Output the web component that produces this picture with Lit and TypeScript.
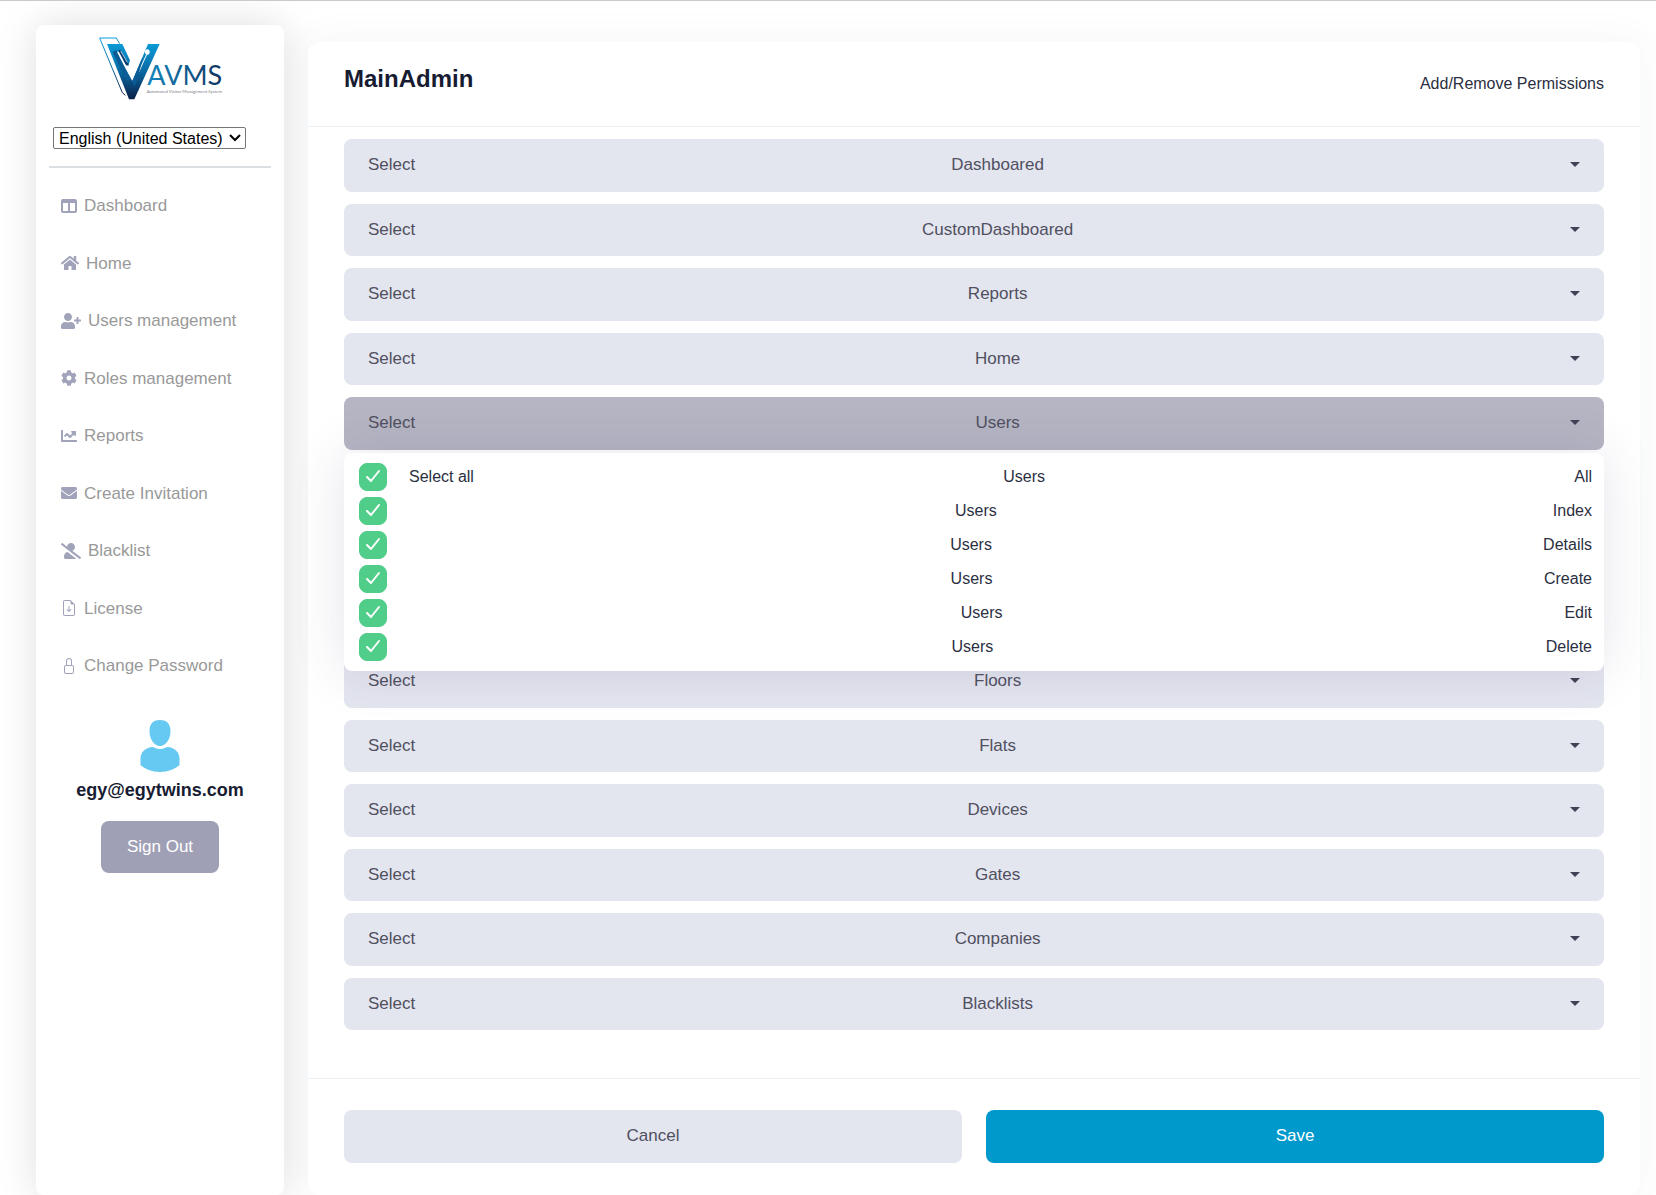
import { LitElement, html, css, svg, nothing } from "lit";
import { customElement, state } from "lit/decorators.js";
import { classMap } from "lit/directives/class-map.js";

interface NavEntry {
  label: string;
  icon: string;
  width: number;
  box: string;
}

const NAV: NavEntry[] = [
  {
    label: "Dashboard",
    width: 16,
    box: "0 0 512 512",
    icon: "M0 96C0 60.7 28.7 32 64 32H448c35.3 0 64 28.7 64 64V416c0 35.3-28.7 64-64 64H64c-35.3 0-64-28.7-64-64V96zm64 64V416H224V160H64zm384 0H288V416H448V160z",
  },
  {
    label: "Home",
    width: 18,
    box: "0 0 576 512",
    icon: "M280.37 148.26L96 300.11V464a16 16 0 0 0 16 16l112.06-.29a16 16 0 0 0 15.92-16V368a16 16 0 0 1 16-16h64a16 16 0 0 1 16 16v95.64a16 16 0 0 0 16 16.05L464 480a16 16 0 0 0 16-16V300L295.67 148.26a12.19 12.19 0 0 0-15.3 0zM571.6 251.47L488 182.56V44.05a12 12 0 0 0-12-12h-56a12 12 0 0 0-12 12v72.61L318.47 43a48 48 0 0 0-61 0L4.34 251.47a12 12 0 0 0-1.6 16.9l25.5 31A12 12 0 0 0 45.15 301l235.22-193.74a12.19 12.19 0 0 1 15.3 0L530.9 301a12 12 0 0 0 16.9-1.6l25.5-31a12 12 0 0 0-1.7-16.93z",
  },
  {
    label: "Users management",
    width: 20,
    box: "0 0 640 512",
    icon: "M624 208h-64v-64c0-8.8-7.2-16-16-16h-32c-8.8 0-16 7.2-16 16v64h-64c-8.8 0-16 7.2-16 16v32c0 8.8 7.2 16 16 16h64v64c0 8.8 7.2 16 16 16h32c8.8 0 16-7.2 16-16v-64h64c8.8 0 16-7.2 16-16v-32c0-8.8-7.2-16-16-16zm-400 48c70.7 0 128-57.3 128-128S294.7 0 224 0 96 57.3 96 128s57.3 128 128 128zm89.6 32h-16.7c-22.2 10.2-46.9 16-72.9 16s-50.6-5.8-72.9-16h-16.7C60.2 288 0 348.2 0 422.4V464c0 26.5 21.5 48 48 48h352c26.5 0 48-21.5 48-48v-41.6c0-74.2-60.2-134.4-134.4-134.4z",
  },
  {
    label: "Roles management",
    width: 16,
    box: "0 0 512 512",
    icon: "M487.4 315.7l-42.6-24.6c4.3-23.2 4.3-47 0-70.2l42.6-24.6c4.9-2.8 7.1-8.6 5.5-14-11.1-35.6-30-67.8-54.7-94.6-3.8-4.1-10-5.1-14.8-2.3L380.8 110c-17.9-15.4-38.5-27.3-60.8-35.1V25.8c0-5.6-3.9-10.5-9.4-11.7-36.7-8.2-74.3-7.8-109.2 0-5.5 1.2-9.4 6.1-9.4 11.7V75c-22.2 7.9-42.8 19.8-60.8 35.1L88.7 85.5c-4.9-2.8-11-1.9-14.8 2.3-24.7 26.7-43.6 58.9-54.7 94.6-1.7 5.4.6 11.2 5.5 14L67.3 221c-4.3 23.2-4.3 47 0 70.2l-42.6 24.6c-4.9 2.8-7.1 8.6-5.5 14 11.1 35.6 30 67.8 54.7 94.6 3.8 4.1 10 5.1 14.8 2.3l42.6-24.6c17.9 15.4 38.5 27.3 60.8 35.1v49.2c0 5.6 3.9 10.5 9.4 11.7 36.7 8.2 74.3 7.8 109.2 0 5.5-1.2 9.4-6.1 9.4-11.7v-49.2c22.2-7.9 42.8-19.8 60.8-35.1l42.6 24.6c4.9 2.8 11 1.9 14.8-2.3 24.7-26.7 43.6-58.9 54.7-94.6 1.5-5.5-.7-11.3-5.6-14.1zM256 336c-44.1 0-80-35.9-80-80s35.9-80 80-80 80 35.9 80 80-35.9 80-80 80z",
  },
  {
    label: "Reports",
    width: 16,
    box: "0 0 512 512",
    icon: "M496 384H64V80c0-8.84-7.16-16-16-16H16C7.16 64 0 71.16 0 80v336c0 17.67 14.33 32 32 32h464c8.84 0 16-7.16 16-16v-32c0-8.84-7.16-16-16-16zM464 96H345.94c-21.38 0-32.09 25.85-16.97 40.97l32.4 32.4L288 242.75l-73.37-73.37c-12.5-12.5-32.76-12.5-45.25 0l-68.69 68.69c-6.25 6.25-6.25 16.38 0 22.63l22.62 22.62c6.25 6.25 16.38 6.25 22.63 0L192 237.25l73.37 73.37c12.5 12.5 32.76 12.5 45.25 0l96-96 32.4 32.4c15.12 15.12 40.97 4.41 40.97-16.97V112c.01-8.84-7.15-16-15.99-16z",
  },
  {
    label: "Create Invitation",
    width: 16,
    box: "0 0 512 512",
    icon: "M502.3 190.8c3.9-3.1 9.7-.2 9.7 4.7V400c0 26.5-21.5 48-48 48H48c-26.5 0-48-21.5-48-48V195.6c0-5 5.7-7.8 9.7-4.7 22.4 17.4 52.1 39.5 154.1 113.6 21.1 15.4 56.7 47.8 92.2 47.6 35.7.3 72-32.8 92.3-47.6 102-74.1 131.6-96.3 154-113.7zM256 320c23.2.4 56.6-29.2 73.4-41.4 132.7-96.3 142.8-104.7 173.4-128.7 5.8-4.5 9.2-11.5 9.2-18.9v-19c0-26.5-21.5-48-48-48H48c-26.5 0-48 21.5-48 48v19c0 7.4 3.4 14.3 9.2 18.9 30.6 23.9 40.7 32.4 173.4 128.7 16.8 12.2 50.2 41.8 73.4 41.4z",
  },
  {
    label: "Blacklist",
    width: 20,
    box: "0 0 640 512",
    icon: "M633.8 458.1L362.3 248.3C412.1 230.7 448 183.8 448 128 448 57.3 390.7 0 320 0c-67.1 0-121.5 51.8-126.9 117.4L45.5 3.4C38.5-2 28.5-.8 23 6.2L3.4 31.4c-5.4 7-4.2 17 2.8 22.4l588.4 454.7c7 5.4 17 4.2 22.5-2.8l19.6-25.3c5.4-6.8 4.1-16.9-2.9-22.3zM96 422.4V464c0 26.5 21.5 48 48 48h350.2L207.4 290.3C144.2 301.3 96 356 96 422.4z",
  },
  {
    label: "License",
    width: 16,
    box: "0 0 16 16",
    icon: "M8.500 6.500a.5.5 0 0 0-1 0v3.793L6.354 9.146a.5.5 0 1 0-.708.708l2 2a.5.5 0 0 0 .708 0l2-2a.5.5 0 0 0-.708-.708L8.500 10.293V6.500zM14 14V4.500L9.500 0H4a2 2 0 0 0-2 2v12a2 2 0 0 0 2 2h8a2 2 0 0 0 2-2zM9.500 3A1.500 1.500 0 0 0 11 4.500h2V14a1 1 0 0 1-1 1H4a1 1 0 0 1-1-1V2a1 1 0 0 1 1-1h5.500v2z",
  },
  {
    label: "Change Password",
    width: 16,
    box: "0 0 16 16",
    icon: "M8 1a2 2 0 0 1 2 2v4H6V3a2 2 0 0 1 2-2zm3 6V3a3 3 0 0 0-6 0v4a2 2 0 0 0-2 2v5a2 2 0 0 0 2 2h6a2 2 0 0 0 2-2V9a2 2 0 0 0-2-2zM5 8h6a1 1 0 0 1 1 1v5a1 1 0 0 1-1 1H5a1 1 0 0 1-1-1V9a1 1 0 0 1 1-1z",
  },
];

const GROUPS: (string | null)[] = [
  "Dashboared",
  "CustomDashboared",
  "Reports",
  "Home",
  "Users",
  null,
  null,
  null,
  "Floors",
  "Flats",
  "Devices",
  "Gates",
  "Companies",
  "Blacklists",
];

const ACTIONS = ["All", "Index", "Details", "Create", "Edit", "Delete"];

const shared = css`
  * {
    box-sizing: border-box;
  }
  button,
  select,
  input {
    font-family: inherit;
  }
`;

@customElement("brand-logo")
export class BrandLogo extends LitElement {
  static styles = css`
    :host {
      display: block;
    }
    .mark {
      display: block;
    }
    .name {
      font-family: Lato, "Liberation Sans", sans-serif;
      font-size: 81px;
    }
    .tagline {
      font-family: Lato, "Liberation Sans", sans-serif;
      font-size: 13px;
    }
  `;

  render() {
    return html`<svg class="mark" width="124" height="64" viewBox="55 47 372 192" role="img" aria-label="AVMS">
      <defs>
        <linearGradient id="arm" x1="0" y1="0" x2="0" y2="1">
          <stop offset="0" stop-color="#0a9bd6" />
          <stop offset="0.5" stop-color="#0a68a2" />
          <stop offset="1" stop-color="#0a2048" />
        </linearGradient>
        <linearGradient id="word" x1="0" y1="0" x2="1" y2="0">
          <stop offset="0" stop-color="#1488bf" />
          <stop offset="1" stop-color="#10325f" />
        </linearGradient>
      </defs>
      <path d="M137 225 L128 217 L60 53 H110 L120 70" fill="none" stroke="url(#arm)" stroke-width="3" />
      <path d="M82 71 H128 L151 120 L146 137 L137 131 L120 94 H110 L158 182 L205 71 H240 L164 237 H148 Z" fill="url(#arm)" />
      <path d="M104 92 L146 178" stroke="#0b5c96" stroke-width="12" />
      <path d="M120 92 L142 132" stroke="#0b3f73" stroke-width="7" stroke-linecap="round" />
      <path d="M123 92 L143 126" stroke="#fff" stroke-width="2" />
      <path d="M202 100 L164 184" stroke="#fff" stroke-width="3" />
      <path d="M189 110 L158 182 L164 200 L176 168 Z" fill="#0b5c96" />
      <ellipse cx="203" cy="95" rx="7" ry="8" fill="#fff" />
      <text class="name" x="203" y="193" fill="url(#word)">AVMS</text>
      <text class="tagline" x="201" y="217" fill="#85808a">Automated Visitor Management System</text>
    </svg>`;
  }
}

@customElement("side-bar")
export class SideBar extends LitElement {
  static styles = [
    shared,
    css`
      :host {
        display: flex;
        flex-direction: column;
        flex: none;
        width: 248px;
        padding: 11px 13px 24px;
        box-sizing: border-box;
        border-radius: 8px;
        background: #fff;
        box-shadow: 0 0 40px rgba(0, 0, 0, 0.13);
      }
      .logo {
        align-self: center;
      }
      .picker {
        display: grid;
        align-self: flex-start;
        align-items: center;
        margin: 27px 0 17px 4px;
      }
      .language,
      .arrow {
        grid-area: 1 / 1;
      }
      .language {
        height: 22px;
        padding: 0 22px 0 5px;
        appearance: none;
        border: 1px solid #767676;
        border-radius: 2px;
        background: #fff;
        color: #000;
        font-size: 16px;
      }
      .arrow {
        justify-self: end;
        margin-right: 5px;
        pointer-events: none;
        fill: none;
        stroke: #000;
        stroke-width: 2;
      }
      .rule {
        width: 100%;
        height: 2px;
        margin: 0 0 9px;
        border: 0;
        background: #dcdfe1;
      }
      .entry {
        display: flex;
        align-items: center;
        gap: 7px;
        padding: 16px 12px;
        color: #999;
        font-size: 17px;
        line-height: 1.5;
        text-decoration: none;
      }
      .glyph {
        flex: none;
        fill: #a1a3ba;
      }
      .account {
        display: flex;
        flex-direction: column;
        align-items: center;
        margin-top: 25px;
      }
      .email {
        margin: 5px 0 17px;
        color: #181c32;
        font-size: 18px;
        font-weight: 700;
        line-height: 27px;
      }
      .sign-out {
        padding: 13px 26px 14px;
        border: 0;
        border-radius: 8px;
        background: #9f9fb5;
        color: #fff;
        font-size: 17px;
        line-height: 1.5;
      }
    `,
  ];

  render() {
    return html`
      <brand-logo class="logo"></brand-logo>
      <div class="picker">
        <select class="language" aria-label="Language">
          <option>English (United States)</option>
        </select>
        <svg class="arrow" width="12" height="8" viewBox="0 0 12 8" aria-hidden="true"><path d="M1 1l5 5 5-5" /></svg>
      </div>
      <hr class="rule" />
      <nav>
        ${NAV.map(
          (item) => html`<a class="entry" href="#">
            <svg class="glyph" width=${item.width} height="16" viewBox=${item.box} aria-hidden="true">
              ${svg`<path fill-rule="evenodd" d=${item.icon} />`}
            </svg>
            <span>${item.label}</span>
          </a>`
        )}
      </nav>
      <div class="account">
        <svg width="40" height="52" viewBox="0 0 40 52" aria-hidden="true">
          <path
            fill="#65c9f1"
            d="M20 0c6 0 10.500 3 10.500 11 0 8-4.500 15-10.500 15S9.500 19 9.500 11C9.500 3 14 0 20 0zM12 27c2 0 4 2 8 2s6-2 8-2c8 1 11.500 6 11.500 12v6C35 49 28 52 20 52S5 49 .5 45v-6C.5 33 4 28 12 27z"
          />
        </svg>
        <div class="email">egy@egytwins.com</div>
        <button class="sign-out" type="button">Sign Out</button>
      </div>
    `;
  }
}

@customElement("permission-group")
export class PermissionGroup extends LitElement {
  static properties = {
    name: { type: String },
    open: { type: Boolean, reflect: true },
  };

  declare name: string;
  declare open: boolean;

  static styles = [
    shared,
    css`
      :host {
        display: block;
        position: relative;
      }
      .toggle {
        display: flex;
        align-items: center;
        justify-content: space-between;
        width: 100%;
        padding: 13px 24px 14px;
        border: 0;
        border-radius: 8px;
        background: #e3e5ef;
        color: #50505f;
        font-size: 17px;
        line-height: 1.5;
      }
      .active {
        background: #b5b5c3;
      }
      .name {
        padding-left: 10px;
      }
      .caret {
        border: 5px solid transparent;
        border-top-color: #3f4254;
        border-bottom-width: 0;
      }
      .menu {
        position: absolute;
        z-index: 5;
        top: calc(100% + 3px);
        left: 0;
        right: 0;
        display: grid;
        gap: 6px;
        padding: 10px 12px 10px 15px;
        border-radius: 8px;
        background: #fff;
        box-shadow: 0 0 50px rgba(82, 63, 105, 0.15);
      }
      .option {
        display: flex;
        align-items: center;
        justify-content: space-between;
        color: #2b2f42;
        font-size: 16px;
        line-height: 28px;
      }
      .lead {
        display: flex;
        gap: 10px;
      }
      .tick {
        display: grid;
        margin-right: 12px;
      }
      .box,
      .check {
        grid-area: 1 / 1;
        width: 28px;
        height: 28px;
        margin: 0;
      }
      .box {
        appearance: none;
        border: 1px solid #e4e6ef;
        border-radius: 8px;
      }
      .box:checked {
        border-color: #50cd89;
        background: #50cd89;
      }
      .check {
        pointer-events: none;
        fill: none;
        stroke: #fff;
        stroke-width: 2;
        stroke-linecap: round;
        stroke-linejoin: round;
      }
    `,
  ];

  private toggle() {
    this.open = !this.open;
  }

  render() {
    return html`
      <button
        type="button"
        class=${classMap({ toggle: true, active: this.open })}
        aria-expanded=${this.open ? "true" : "false"}
        @click=${this.toggle}
      >
        <span>Select</span>
        <span class="name">${this.name}</span>
        <span class="caret"></span>
      </button>
      ${this.open
        ? html`<div class="menu">
            ${ACTIONS.map(
              (action, i) => html`<label class="option">
                <span class="lead">
                  <span class="tick">
                    <input class="box" type="checkbox" checked />
                    <svg class="check" viewBox="0 0 28 28" aria-hidden="true"><path d="M8 14l4 4 8-10" /></svg>
                  </span>
                  ${i === 0 ? html`<span>Select all</span>` : nothing}
                </span>
                <span>${this.name}</span>
                <span>${action}</span>
              </label>`
            )}
          </div>`
        : nothing}
    `;
  }
}

@customElement("app-root")
export class AppRoot extends LitElement {
  @state() private opened = "Users";

  static styles = [
    shared,
    css`
      :host {
        display: block;
        font-family: "Liberation Sans", Arial, sans-serif;
      }
      .page {
        display: flex;
        gap: 24px;
        min-height: 100vh;
        padding: 24px 16px 0 36px;
        border-top: 1px solid #cacaca;
        background: #fff;
        overflow: hidden;
      }
      .card {
        flex: 1;
        min-width: 0;
        margin-top: 17px;
        border-radius: 12px;
        background: #fff;
        box-shadow: 0 0 40px rgba(76, 87, 125, 0.06);
      }
      .head {
        display: flex;
        align-items: center;
        justify-content: space-between;
        min-height: 85px;
        padding: 0 36px;
        border-bottom: 1px solid #eff0f3;
      }
      .title {
        margin: 0;
        padding-bottom: 10px;
        color: #181c32;
        font-size: 24px;
        font-weight: 700;
        line-height: 28px;
      }
      .hint {
        color: #2b2f42;
        font-size: 16px;
        line-height: 24px;
      }
      .groups {
        display: grid;
        gap: 12px;
        padding: 12px 36px 48px;
        font-size: 17px;
        line-height: 1.5;
      }
      .blank {
        padding: 13px 24px 14px;
        border-radius: 8px;
        background: #e3e5ef;
      }
      .blank::before {
        content: "";
        display: block;
        height: 1lh;
      }
      .actions {
        display: grid;
        grid-template-columns: 1fr 1fr;
        gap: 24px;
        padding: 31px 36px;
        border-top: 1px solid #eff0f3;
      }
      .button {
        padding: 13px 24px 14px;
        border: 0;
        border-radius: 8px;
        background: #e3e5ef;
        color: #50505f;
        font-size: 17px;
        line-height: 1.5;
      }
      .primary {
        background: #0099cc;
        color: #fff;
      }
    `,
  ];

  render() {
    return html`<div class="page">
      <side-bar></side-bar>
      <main class="card">
        <header class="head">
          <h1 class="title">MainAdmin</h1>
          <span class="hint">Add/Remove Permissions</span>
        </header>
        <div class="groups">
          ${GROUPS.map((name) =>
            name === null
              ? html`<div class="blank"></div>`
              : html`<permission-group .name=${name} .open=${name === this.opened}></permission-group>`
          )}
        </div>
        <footer class="actions">
          <button class="button" type="button">Cancel</button>
          <button class="button primary" type="button">Save</button>
        </footer>
      </main>
    </div>`;
  }
}
